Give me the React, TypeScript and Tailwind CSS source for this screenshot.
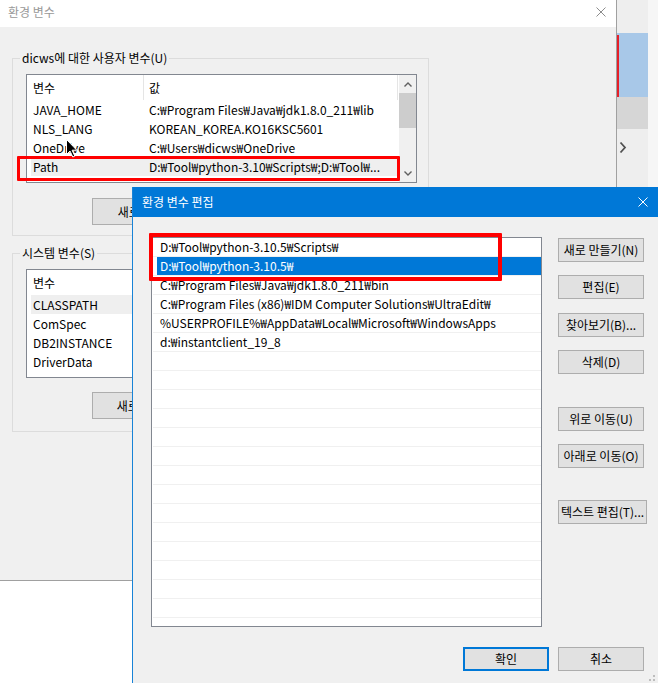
import type React from "react"

const userVars = [
  ["JAVA_HOME", "C:₩Program Files₩Java₩jdk1.8.0_211₩lib"],
  ["NLS_LANG", "KOREAN_KOREA.KO16KSC5601"],
  ["OneDrive", "C:₩Users₩dicws₩OneDrive"],
  ["Path", "D:₩Tool₩python-3.10₩Scripts₩;D:₩Tool₩..."],
]

const systemVars = [["CLASSPATH", ""], ["ComSpec", ""], ["DB2INSTANCE", ""], ["DriverData", ""]]

const paths = [
  "D:₩Tool₩python-3.10.5₩Scripts₩",
  "D:₩Tool₩python-3.10.5₩",
  "C:₩Program Files₩Java₩jdk1.8.0_211₩bin",
  "C:₩Program Files (x86)₩IDM Computer Solutions₩UltraEdit₩",
  "%USERPROFILE%₩AppData₩Local₩Microsoft₩WindowsApps",
  "d:₩instantclient_19_8",
]

function WinButton({ label, className = "" }: { label: string; className?: string }) {
  return (
    <div
      className={`flex items-center justify-center whitespace-nowrap bg-[#e1e1e1] border border-[#adadad] ${className}`}
    >
      {label}
    </div>
  )
}

function CloseIcon({ color }: { color: string }) {
  return (
    <svg width="10" height="10" viewBox="0 0 10 10">
      <path d="M0.5 0.5 L9.5 9.5 M9.5 0.5 L0.5 9.5" stroke={color} strokeWidth="1" fill="none" />
    </svg>
  )
}

function Chevron({ dir }: { dir: "up" | "down" }) {
  return (
    <svg width="8" height="5" viewBox="0 0 8 5">
      <path
        d={dir === "up" ? "M0.5 4.5 L4 1 L7.5 4.5" : "M0.5 0.5 L4 4 L7.5 0.5"}
        stroke="#606060"
        strokeWidth="1.4"
        fill="none"
      />
    </svg>
  )
}

function VarList({
  rows,
  selected,
  scroll,
}: {
  rows: string[][]
  selected: number
  scroll?: boolean
}) {
  return (
    <div className="ml-[13px] w-[391px] h-[109px] bg-white border border-[#828790] flex overflow-hidden">
      <div className="w-[372px] flex flex-col">
        <div className="flex h-[25px] shrink-0">
          <div className="w-[117px] pl-[6px] flex items-center border-r border-[#e5e5e5]">변수</div>
          <div className="w-[254px] pl-[5px] flex items-center border-r border-[#e5e5e5]">값</div>
        </div>
        {rows.map(([name, value], i) => (
          <div
            key={name}
            className={`flex h-[19px] shrink-0 ml-[4px] leading-[19px] whitespace-nowrap ${
              i === selected ? "bg-[#efefef]" : ""
            }`}
          >
            <div className="w-[113px] pl-[2px]">{name}</div>
            <div className="flex-1 pl-[5px] overflow-hidden">{value}</div>
          </div>
        ))}
      </div>
      {scroll && (
        <div className="w-[17px] flex flex-col bg-[#f0f0f0]">
          <div className="h-[18px] flex items-center justify-center">
            <Chevron dir="up" />
          </div>
          <div className="h-[35px] bg-[#cdcdcd]" />
          <div className="flex-1" />
          <div className="h-[17px] flex items-center justify-center">
            <Chevron dir="down" />
          </div>
        </div>
      )}
    </div>
  )
}

export default function App() {
  return (
    <div className="relative w-[658px] h-[683px] overflow-hidden bg-white text-[12px] text-black font-['Noto_Sans_CJK_KR','Noto_Sans',sans-serif]">
      <div className="flex h-[683px]">
        {/* 환경 변수 (background window) */}
        <div className="w-[617px] flex flex-col">
          <div className="h-[581px] flex flex-col border-r border-b border-[#a0a0a0]">
            <div className="h-[27px] shrink-0 bg-white flex items-center justify-between pl-[8px] pr-[10px] pb-[4px]">
              <span className="text-[#999999]">환경 변수</span>
              <CloseIcon color="#8c8c8c" />
            </div>
            <div className="flex-1 bg-[#f0f0f0] px-[12px] pt-[23px]">
              <fieldset className="w-[417px] border border-[#dcdcdc] pb-[10px]">
                <legend className="ml-[7px] px-[2px] leading-[16px]">dicws에 대한 사용자 변수(U)</legend>
                <div className="mt-[8px]">
                  <VarList rows={userVars} selected={3} scroll />
                </div>
                <div className="flex gap-[8px] ml-[79px] mt-[15px]">
                  <WinButton label="새로 만들기(N)..." className="w-[136px] h-[27px]" />
                  <WinButton label="편집(E)..." className="w-[86px] h-[27px]" />
                  <WinButton label="삭제(D)" className="w-[86px] h-[27px]" />
                </div>
              </fieldset>
              <fieldset className="w-[417px] mt-[9px] border border-[#dcdcdc] pb-[12px]">
                <legend className="ml-[7px] px-[2px] leading-[16px]">시스템 변수(S)</legend>
                <div className="mt-[8px]">
                  <VarList rows={systemVars} selected={0} />
                </div>
                <div className="flex gap-[8px] ml-[79px] mt-[14px]">
                  <WinButton label="새로 만들기(W)..." className="w-[136px] h-[27px]" />
                  <WinButton label="편집(I)..." className="w-[86px] h-[27px]" />
                  <WinButton label="삭제(L)" className="w-[86px] h-[27px]" />
                </div>
              </fieldset>
            </div>
          </div>
          <div className="flex-1 bg-white" />
        </div>

        {/* window behind, on the right */}
        <div className="w-[31px] flex flex-col bg-[#eeeeee]">
          <div className="h-[33px]" />
          <div className="h-[64px] bg-[#a8c8e8]">
            <div className="w-[2px] h-[63px] mt-[2px] bg-[#e5202a]" />
          </div>
          <div className="h-[32px] bg-[#d6d6d6]" />
          <div className="mt-[12px] ml-[2px]">
            <svg width="8" height="13" viewBox="0 0 8 13">
              <path d="M1.5 1.5 L6 6.5 L1.5 11.5" stroke="#505050" strokeWidth="1.8" fill="none" />
            </svg>
          </div>
        </div>
        <div className="flex-1 bg-[#f6f6f6]" />
      </div>

      {/* 환경 변수 편집 dialog, on top */}
      <div className="absolute left-[132px] top-[187px] w-[526px] h-[496px] flex flex-col bg-[#f0f0f0] border-l border-[#1883d7]">
        <div className="h-[30px] shrink-0 bg-[#0078d7] flex items-center justify-between pl-[9px] pr-[10px] text-white">
          <span>환경 변수 편집</span>
          <CloseIcon color="#ffffff" />
        </div>
        <div className="pl-[18px] pt-[20px]">
          <div className="flex gap-[16px]">
            <div className="w-[391px] h-[390px] shrink-0 bg-white border border-[#828790] flex flex-col">
              {Array.from({ length: 20 }, (_, i) => paths[i] ?? "").map((p, i) => (
                <div key={i} className="h-[19px] shrink-0 ml-[1px] border-b border-[#f0f0f0] flex">
                  <div
                    className={`flex-1 ml-[4px] pl-[3px] leading-[18px] whitespace-nowrap overflow-hidden ${
                      i === 1 ? "bg-[#0078d7] text-white" : ""
                    }`}
                  >
                    {p}
                  </div>
                </div>
              ))}
            </div>
            <div className="flex flex-col items-start pt-[1px] shrink-0">
              <WinButton label="새로 만들기(N)" className="w-[86px] h-[24px]" />
              <WinButton label="편집(E)" className="w-[86px] h-[24px] mt-[13px]" />
              <WinButton label="찾아보기(B)..." className="w-[86px] h-[24px] mt-[14px]" />
              <WinButton label="삭제(D)" className="w-[86px] h-[24px] mt-[13px]" />
              <WinButton label="위로 이동(U)" className="w-[86px] h-[24px] mt-[33px]" />
              <WinButton label="아래로 이동(O)" className="w-[86px] h-[24px] mt-[13px]" />
              <WinButton label="텍스트 편집(T)..." className="w-[89px] h-[24px] mt-[32px]" />
            </div>
          </div>
          <div className="flex justify-end gap-[9px] mt-[20px] w-[493px]">
            <div className="w-[86px] h-[24px] flex items-center justify-center bg-[#e1e1e1] border-2 border-[#0078d7]">
              확인
            </div>
            <WinButton label="취소" className="w-[86px] h-[24px]" />
          </div>
        </div>
        <svg className="absolute right-[3px] bottom-[2px]" width="6" height="6" viewBox="0 0 6 6">
          <rect x="4" y="0" width="2" height="2" fill="#bdbdbd" />
          <rect x="0" y="4" width="2" height="2" fill="#bdbdbd" />
          <rect x="4" y="4" width="2" height="2" fill="#bdbdbd" />
        </svg>
      </div>

      {/* red annotation boxes */}
      <div className="absolute left-[17px] top-[156px] w-[383px] h-[25px] border-[3px] border-[#ff0000] rounded-[1px]" />
      <div className="absolute left-[149px] top-[233px] w-[353px] h-[48px] border-[4px] border-[#ff0000] rounded-[1px]" />

      {/* mouse pointer */}
      <svg className="absolute left-[66px] top-[139px]" width="12" height="19" viewBox="0 0 12 19">
        <path d="M0.5 0.5 L0.5 15.5 L4 12 L6.8 18 L8.8 17.1 L6.1 11.2 L10.8 11.2 Z" fill="#000" stroke="#fff" strokeWidth="1" />
      </svg>
    </div>
  )
}
